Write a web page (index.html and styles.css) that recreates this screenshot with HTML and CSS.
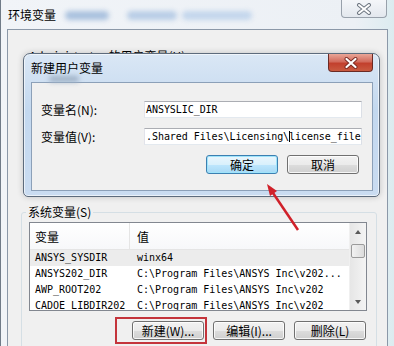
FILE: index.html
```html
<!DOCTYPE html>
<html lang="zh-CN">
<head>
    <meta charset="UTF-8">
    <title>环境变量</title>
    <link rel="stylesheet" href="styles.css">
</head>
<body>
    <div class="desk">
        <div class="win">
            <div class="win-title">
                <span class="win-name">环境变量</span>
                <span class="smudge s1"></span>
                <span class="smudge s2"></span>
                <span class="smudge s3"></span>
                <div class="close-btn">
                    <svg width="16" height="12" viewBox="0 0 16 12">
                        <path d="M3 2 L13 10 M13 2 L3 10" stroke="#6d7680" stroke-width="4" stroke-linecap="round"/>
                        <path d="M3 2 L13 10 M13 2 L3 10" stroke="#fff" stroke-width="2" stroke-linecap="round"/>
                    </svg>
                </div>
            </div>
            <div class="win-client">
                <div class="user-group">
                    <div class="group-label">Administrator 的用户变量(U)</div>
                </div>
                <fieldset class="group">
                    <legend>系统变量(S)</legend>
                    <div class="list">
                        <div class="list-body">
                            <div class="list-head">
                                <span class="col1">变量</span>
                                <span class="col2">值</span>
                            </div>
                            <div class="row sel"><span class="col1 mono">ANSYS_SYSDIR</span><span class="col2 mono">winx64</span></div>
                            <div class="row"><span class="col1 mono">ANSYS202_DIR</span><span class="col2 mono">C:\Program Files\ANSYS Inc\v202...</span></div>
                            <div class="row"><span class="col1 mono">AWP_ROOT202</span><span class="col2 mono">C:\Program Files\ANSYS Inc\v202</span></div>
                            <div class="row"><span class="col1 mono">CADOE_LIBDIR202</span><span class="col2 mono">C:\Program Files\ANSYS Inc\v202</span></div>
                        </div>
                        <div class="scrollbar">
                            <div class="sb-btn"><span class="tri up"></span></div>
                            <div class="sb-track"><div class="thumb"></div></div>
                            <div class="sb-btn"><span class="tri down"></span></div>
                        </div>
                    </div>
                    <div class="btn-row">
                        <button class="btn">新建(W)...</button>
                        <button class="btn">编辑(I)...</button>
                        <button class="btn">删除(L)</button>
                    </div>
                </fieldset>
            </div>
        </div>

        <!-- the child dialog on top -->
        <div class="dialog">
            <div class="dlg-title">
                <span>新建用户变量</span>
                <span class="smudge s4"></span>
                <div class="red-close">
                    <svg width="16" height="12" viewBox="0 0 16 12">
                        <path d="M3.5 2 L12.5 10 M12.5 2 L3.5 10" stroke="#7a2a22" stroke-width="4" stroke-linecap="round"/>
                        <path d="M3.5 2 L12.5 10 M12.5 2 L3.5 10" stroke="#fff" stroke-width="2.2" stroke-linecap="round"/>
                    </svg>
                </div>
            </div>
            <div class="dlg-client">
                <div class="field">
                    <label>变量名(N):</label>
                    <div class="input mono">ANSYSLIC_DIR</div>
                </div>
                <div class="field">
                    <label>变量值(V):</label>
                    <div class="input mono">.Shared Files\Licensing\<span class="caret"></span>license_file</div>
                </div>
                <div class="dlg-buttons">
                    <button class="btn default">确定</button>
                    <button class="btn">取消</button>
                </div>
            </div>
        </div>

        <div class="mark"></div>
        <svg class="arrow" width="394" height="346" viewBox="0 0 394 346">
            <line x1="298" y1="230" x2="273" y2="193" stroke="#d0212a" stroke-width="2.5"/>
            <polygon points="267,184 277,191 270,196" fill="#d0212a"/>
        </svg>
    </div>
</body>
</html>
```

FILE: styles.css
```css
* {
    margin: 0;
    padding: 0;
    box-sizing: border-box;
}

body {
    width: 394px;
    height: 346px;
    overflow: hidden;
    font-family: "Noto Sans CJK SC", sans-serif;
    font-size: 12px;
    color: #000;
    background: #dfe9f3;
}

.mono {
    font-family: "DejaVu Sans Mono", "Noto Sans CJK SC", monospace;
    font-size: 10px;
}

.desk {
    position: relative;
    width: 394px;
    height: 346px;
}

/* outer window */
.win {
    display: flex;
    flex-direction: column;
    height: 346px;
    padding: 0 6px;
    border-left: 1px solid #707b88;
    background: linear-gradient(90deg, #f1f4f8 0%, #ecf0f5 90%, #dcecf0 100%);
}

.win-title {
    position: relative;
    height: 29px;
    line-height: 29px;
    padding-left: 1px;
}

.smudge {
    position: absolute;
    border-radius: 6px;
    filter: blur(2.5px);
}

.s1 { left: 58px; top: 11px; width: 44px; height: 9px; background: #a9c1de; }
.s2 { left: 120px; top: 11px; width: 50px; height: 9px; background: #b8cde6; }
.s3 { left: 175px; top: 11px; width: 70px; height: 9px; background: #c3d6ec; }
.s4 { left: 18px; top: 22px; width: 30px; height: 6px; background: #9fb1c6; }

.close-btn {
    position: absolute;
    top: 0;
    right: 1px;
    width: 46px;
    height: 18px;
    border: 1px solid #98a1ab;
    border-top: none;
    border-radius: 0 0 4px 4px;
    background: linear-gradient(#f4f6f9, #e3e8ee);
    display: flex;
    align-items: center;
    justify-content: center;
}

.win-client {
    flex: 1;
    border: 1px solid #8b98a8;
    border-bottom: none;
    background: #f0f0f0;
    padding: 0 10px 0 13px;
}

.user-group {
    height: 175px;
    padding-top: 19px;
    padding-left: 8px;
}

/* only the top of this label peeks out above the dialog */
.group-label {
    height: 5px;
    line-height: 14px;
    overflow: hidden;
    white-space: nowrap;
}

.group {
    border: 1px solid #d5dfe5;
    border-radius: 3px;
    padding: 3px 9px 0 7px;
    height: 200px;
}

.group legend {
    padding: 0 2px;
    margin-left: -3px;
    line-height: 14px;
}

/* list view */
.list {
    display: flex;
    height: 89px;
    border: 1px solid #828790;
    background: #fff;
}

.list-body {
    flex: 1;
    overflow: hidden;
}

.list-head {
    display: flex;
    height: 27px;
    border-bottom: 1px solid #e5e5e5;
    background: linear-gradient(#fff, #f7f8fa);
}

.list-head span {
    padding-top: 3px;
    line-height: 22px;
}

.col1 {
    width: 100px;
    padding-left: 5px;
    flex-shrink: 0;
}

.list-head .col1 {
    border-right: 1px solid #e5e5e5;
}

.col2 {
    padding-left: 7px;
    white-space: nowrap;
}

.row {
    display: flex;
    height: 16px;
    line-height: 16px;
    white-space: nowrap;
}

.row.sel {
    background: #ececec;
}

.scrollbar {
    width: 17px;
    display: flex;
    flex-direction: column;
    background: linear-gradient(90deg, #e6e6e6, #f4f4f4);
    border-left: 1px solid #f0f0f0;
}

.sb-btn {
    height: 17px;
    display: flex;
    align-items: center;
    justify-content: center;
}

.tri {
    width: 0;
    height: 0;
    border-left: 3px solid transparent;
    border-right: 3px solid transparent;
}

.tri.up { border-bottom: 4px solid #5a5a5a; }
.tri.down { border-top: 4px solid #5a5a5a; }

.sb-track {
    flex: 1;
    padding: 4px 1px 0;
}

.thumb {
    height: 14px;
    border: 1px solid #9b9b9b;
    border-radius: 2px;
    background: linear-gradient(90deg, #f2f2f2, #dcdcdc);
}

.btn-row {
    display: flex;
    justify-content: flex-end;
    gap: 9px;
    margin-top: 10px;
    padding-right: 1px;
}

.btn {
    width: 72px;
    height: 19px;
    font-family: "Noto Sans CJK SC", sans-serif;
    font-size: 12px;
    line-height: 17px;
    color: #000;
    border: 1px solid #707070;
    border-radius: 3px;
    background: linear-gradient(#f2f2f2 0%, #ebebeb 50%, #dddddd 51%, #cfcfcf 100%);
    box-shadow: inset 0 0 0 1px rgba(255, 255, 255, 0.8);
}

/* child dialog */
.dialog {
    position: absolute;
    left: 23px;
    top: 53px;
    width: 357px;
    height: 144px;
    display: flex;
    flex-direction: column;
    padding: 0 6px 5px 7px;
    border: 1px solid #5d6b7c;
    border-radius: 7px 7px 5px 5px;
    background: linear-gradient(#dae7f5 0%, #c3d8ef 40%, #cadcf1 100%);
    box-shadow: inset 0 0 0 1px rgba(255, 255, 255, 0.6), 0 0 6px rgba(0, 0, 0, 0.2);
}

.dlg-title {
    position: relative;
    height: 28px;
    line-height: 28px;
}

.red-close {
    position: absolute;
    top: 0;
    right: 0;
    width: 45px;
    height: 18px;
    border: 1px solid #6b2a24;
    border-top: none;
    border-radius: 0 0 4px 4px;
    background: linear-gradient(#e9a597 0%, #d26b5c 45%, #c2402d 55%, #c95a40 100%);
    display: flex;
    align-items: center;
    justify-content: center;
}

.dlg-client {
    flex: 1;
    border: 1px solid #8ca0b8;
    background: #f0f0f0;
    padding: 18px 10px 0 9px;
}

.field {
    display: flex;
    align-items: center;
    height: 17px;
    margin-bottom: 10px;
}

.field label {
    width: 103px;
    line-height: 17px;
}

.input {
    width: 218px;
    height: 17px;
    line-height: 15px;
    padding-left: 1px;
    letter-spacing: -0.06px;
    border: 1px solid #abadb3;
    border-left-color: #e2e3ea;
    border-right-color: #dbdfe6;
    border-bottom-color: #e3e9ef;
    background: #fff;
    white-space: nowrap;
    overflow: hidden;
}

.caret {
    display: inline-block;
    width: 1px;
    height: 11px;
    margin-right: -1px;
    vertical-align: -2px;
    background: #000;
}

.dlg-buttons {
    display: flex;
    justify-content: flex-end;
    gap: 9px;
    margin-top: 4px;
    padding-right: 3px;
}

.btn.default {
    border-color: #3c7fb1;
    background: linear-gradient(#eaf6fd 0%, #d9f0fc 50%, #bee6fd 51%, #a7d9f5 100%);
    box-shadow: inset 0 0 0 1px #9ee4fb;
}

/* annotations on the screenshot */
.mark {
    position: absolute;
    left: 115px;
    top: 317px;
    width: 92px;
    height: 27px;
    border: 2px solid #c4343b;
}

.arrow {
    position: absolute;
    left: 0;
    top: 0;
    pointer-events: none;
}
```
